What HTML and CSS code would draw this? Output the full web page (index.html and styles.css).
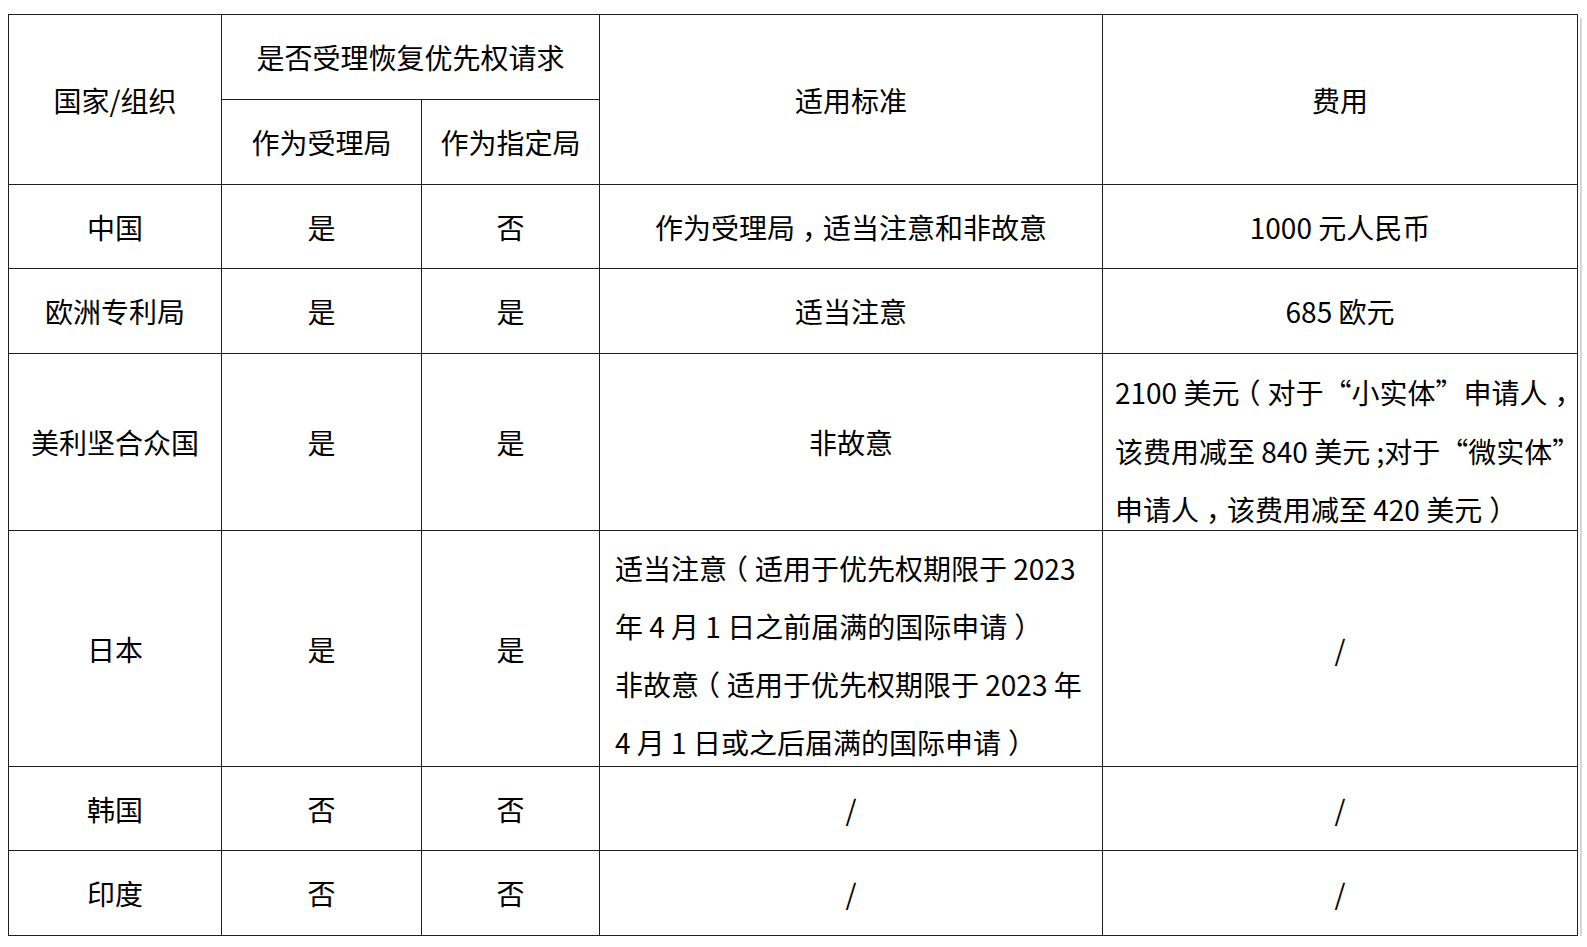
FILE: index.html
```html
<!DOCTYPE html>
<html lang="zh-CN">
<head>
<meta charset="utf-8">
<title>恢复优先权请求</title>
<link rel="stylesheet" href="styles.css">
</head>
<body>
<div class="sheet">
  <div class="grid">
    <div class="cell tall">国家/组织</div>
    <div class="cell wide">是否受理恢复优先权请求</div>
    <div class="cell tall">适用标准</div>
    <div class="cell tall">费用</div>
    <div class="cell">作为受理局</div>
    <div class="cell">作为指定局</div>

    <div class="cell">中国</div>
    <div class="cell">是</div>
    <div class="cell">否</div>
    <div class="cell">作为受理局<span class="p">，</span>适当注意和非故意</div>
    <div class="cell">1000 元人民币</div>

    <div class="cell">欧洲专利局</div>
    <div class="cell">是</div>
    <div class="cell">是</div>
    <div class="cell">适当注意</div>
    <div class="cell">685 欧元</div>

    <div class="cell">美利坚合众国</div>
    <div class="cell">是</div>
    <div class="cell">是</div>
    <div class="cell">非故意</div>
    <div class="cell multi fee">2100 美元<span class="p">（</span>对于“小实体”申请人<span class="p">，</span><br>该费用减至 840 美元 ;对于“微实体”<br>申请人<span class="p">，</span>该费用减至 420 美元<span class="p">）</span></div>

    <div class="cell">日本</div>
    <div class="cell">是</div>
    <div class="cell">是</div>
    <div class="cell multi std">适当注意<span class="p">（</span>适用于优先权期限于 2023<br>年 4 月 1 日之前届满的国际申请<span class="p">）</span><br>非故意<span class="p">（</span>适用于优先权期限于 2023 年<br>4 月 1 日或之后届满的国际申请<span class="p">）</span></div>
    <div class="cell">/</div>

    <div class="cell">韩国</div>
    <div class="cell">否</div>
    <div class="cell">否</div>
    <div class="cell">/</div>
    <div class="cell">/</div>

    <div class="cell">印度</div>
    <div class="cell">否</div>
    <div class="cell">否</div>
    <div class="cell">/</div>
    <div class="cell">/</div>
  </div>
</div>
</body>
</html>
```

FILE: styles.css
```css
html, body {
  margin: 0;
  padding: 0;
  background: #ffffff;
}

.sheet {
  padding: 14px 0 0 8px;
}

.grid {
  display: grid;
  width: max-content;
  grid-template-columns: 212px 199px 177px 502px 474px;
  grid-template-rows: 84px 84px 83px 84px 176px 235px 83px 84px;
  gap: 1px;
  border: 1px solid #1f1f1f;
  background: #1f1f1f;
  box-shadow: 2px 2px 0 0 #ffffff, 4px 4px 0 0 #d6d6d6;
  font-family: "Noto Sans CJK SC", "Microsoft YaHei", sans-serif;
  font-size: 28px;
  color: #000000;
}

.cell {
  background: #ffffff;
  display: flex;
  align-items: center;
  justify-content: center;
  text-align: center;
  white-space: nowrap;
  line-height: 40px;
}

.p {
  display: inline-block;
  width: 1em;
  text-align: center;
  font-feature-settings: "halt" 1;
}

.tall {
  grid-row: span 2;
}

.wide {
  grid-column: span 2;
}

.multi {
  display: block;
  text-align: left;
  line-height: 58px;
  overflow: visible;
}

.fee {
  padding: 9px 0 0 12px;
  line-height: 58.5px;
}

.std {
  padding: 8px 0 0 15px;
}
```
